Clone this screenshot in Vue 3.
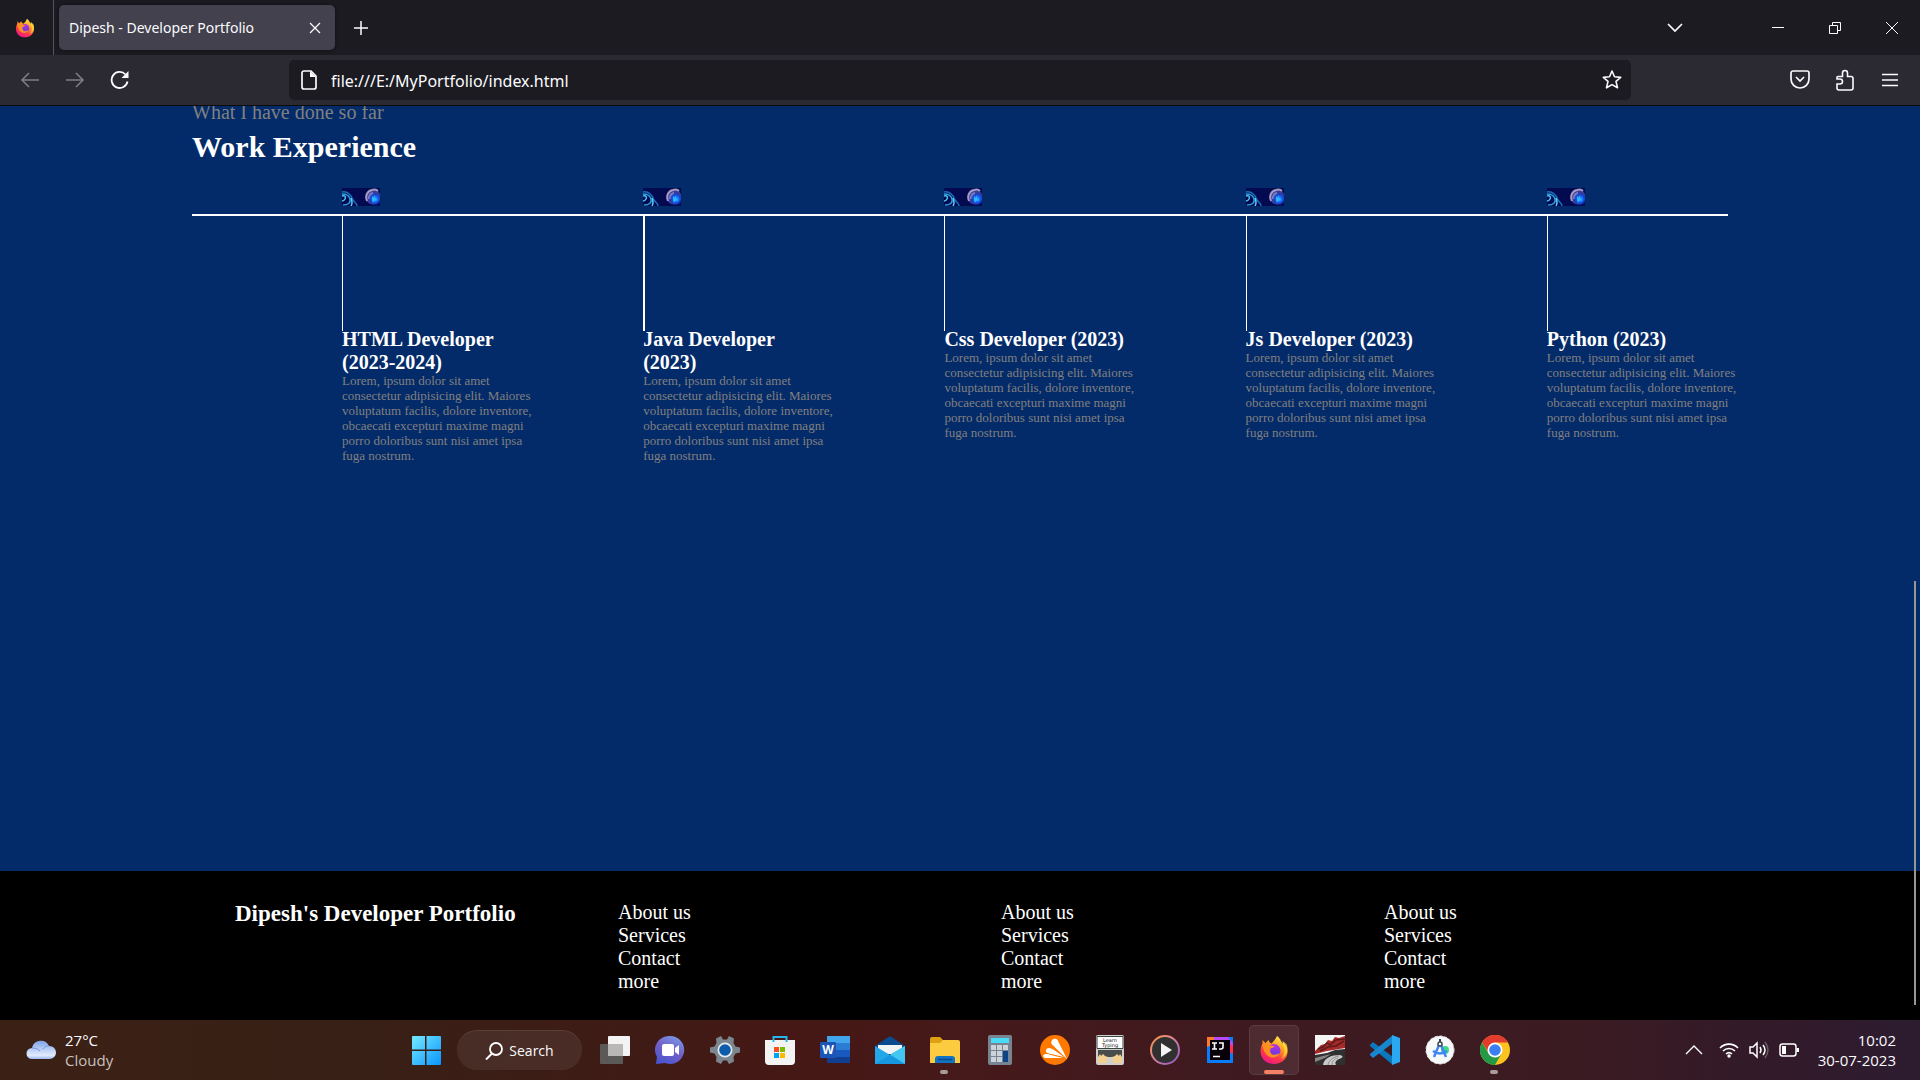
<script setup>
const lorem =
  'Lorem, ipsum dolor sit amet consectetur adipisicing elit. Maiores voluptatum facilis, dolore inventore, obcaecati excepturi maxime magni porro doloribus sunt nisi amet ipsa fuga nostrum.'
const jobs = [
  'HTML Developer (2023-2024)',
  'Java Developer (2023)',
  'Css Developer (2023)',
  'Js Developer (2023)',
  'Python (2023)',
]
const footerLinks = ['About us', 'Services', 'Contact', 'more']
</script>

<template>
  <div class="screen">
    <svg class="sprite" aria-hidden="true">
      <defs>
        <linearGradient id="ffBody" x1="0.8" y1="0" x2="0.3" y2="1">
          <stop offset="0" stop-color="#fff44f" />
          <stop offset="0.4" stop-color="#ff9a1f" />
          <stop offset="0.7" stop-color="#ff3b47" />
          <stop offset="1" stop-color="#f0148c" />
        </linearGradient>
        <linearGradient id="ffGlobe" x1="0.6" y1="0" x2="0.4" y2="1">
          <stop offset="0" stop-color="#b833e1" />
          <stop offset="1" stop-color="#5b3be0" />
        </linearGradient>
        <radialGradient id="moonGlow">
          <stop offset="0" stop-color="#20b8ff" />
          <stop offset="0.5" stop-color="#1556f0" />
          <stop offset="1" stop-color="#1020a0" stop-opacity="0" />
        </radialGradient>
      </defs>
      <symbol id="firefox" viewBox="0 0 30 30">
        <path d="M18 1c4 3 4 6 6 8 0-1 0-2-.5-3 4 4 5.500 8 5 12-1 7-7 11-13.500 11C7 29 1.500 23.500 1.500 16c0-4 1.500-6 2-8V5l3 3 3-3c.5 2 1.500 3 3 3.500 2-2 4-4 5.500-7.500z" fill="url(#ffBody)" />
        <circle cx="15" cy="15.500" r="6.500" fill="url(#ffGlobe)" />
        <path d="M3.500 9c3-1 6 0 8 1.500l4 .5c-1 2-3 2-4 2.500-1 3 0 5 2 6 3 1 5-1 7-1-2 4-7 5-10.500 3-4-2-6-7-6.500-12.500z" fill="#ff9020" />
        <path d="M18 1c4 3 4 6 6 9 3 5 1 11-2 14 6-3 8-9 5.500-15l-4-3c0 1 .5 2 .5 3-2-2-2-5-6-8z" fill="#ffe03c" opacity="0.7" />
      </symbol>
      <symbol id="thumb" viewBox="0 0 38 18">
        <rect width="38" height="18" fill="#040a50" />
        <g fill="none" stroke-width="1.500">
          <path d="M0 8c3-1 4 1 3 3s-2 2-3 2" stroke="#4ac7f0" />
          <path d="M0 4c6-1 9 3 11 8 2 3 4 3 4 6" stroke="#1a6fb8" />
          <path d="M1 17c5 0 8-2 7-6S4 6 0 6" stroke="#2aa0e0" />
          <path d="M9 18c2-3 1-5 0-8" stroke="#5ccbf2" />
        </g>
        <circle cx="31" cy="9" r="7.500" fill="#39409c" />
        <path d="M25 13c-2-5 0-10 5-11 3-1 5 0 6 1" fill="none" stroke="#a79ac4" stroke-width="2" />
        <path d="M27 11c0-3 1-5 4-6" fill="none" stroke="#8d8fc4" stroke-width="2" />
        <circle cx="33" cy="11" r="7" fill="url(#moonGlow)" />
        <path d="M30 8l2 2 1-3v4l3 1-4 1-1 2-1-3z" fill="#28baff" />
      </symbol>
    </svg>

    <header class="browser">
      <div class="tabbar">
        <button class="pin" aria-label="Firefox"><svg width="20" height="20"><use href="#firefox" /></svg></button>
        <div class="tab">
          <span>Dipesh - Developer Portfolio</span>
          <button aria-label="Close tab">
            <svg width="12" height="12" viewBox="0 0 12 12"><path d="M1 1l10 10M11 1L1 11" stroke-width="1.300" /></svg>
          </button>
        </div>
        <button class="newtab" aria-label="New tab">
          <svg width="16" height="16" viewBox="0 0 16 16"><path d="M8 1v14M1 8h14" stroke-width="1.500" /></svg>
        </button>
        <div class="window-controls">
          <button aria-label="List all tabs"><svg width="16" height="10" viewBox="0 0 16 10"><path d="M1 1l7 7 7-7" stroke-width="1.700" /></svg></button>
          <button class="minimize" aria-label="Minimize"><svg width="12" height="14" viewBox="0 0 12 14"><path d="M0 6.500h12" /></svg></button>
          <button aria-label="Restore"><svg width="14" height="14" viewBox="0 0 14 14"><path d="M1.500 4.500h8v8h-8zM4.500 4V1.500h8v8H10" /></svg></button>
          <button aria-label="Close"><svg width="14" height="14" viewBox="0 0 14 14"><path d="M1 1l12 12M13 1L1 13" /></svg></button>
        </div>
      </div>

      <nav class="toolbar" aria-label="Browser toolbar">
        <button class="dim" aria-label="Back"><svg width="20" height="18" viewBox="0 0 20 18"><path d="M19 9H2M9 2L2 9l7 7" stroke-width="1.500" /></svg></button>
        <button class="dim" aria-label="Forward"><svg width="20" height="18" viewBox="0 0 20 18"><path d="M1 9h17M11 2l7 7-7 7" stroke-width="1.500" /></svg></button>
        <button aria-label="Reload">
          <svg width="20" height="20" viewBox="0 0 20 20"><path d="M17.500 11.500A8 8 0 1 1 15.500 4.500" stroke-width="1.800" /><path d="M18.500 1v7h-7z" fill="#fbfbfe" stroke="none" /></svg>
        </button>
        <div class="urlbar">
          <svg width="16" height="20" viewBox="0 0 16 20"><path d="M3 1h7l5 5v11a2 2 0 0 1-2 2H3a2 2 0 0 1-2-2V3a2 2 0 0 1 2-2z" stroke-width="1.700" /><path d="M9 1v6h6z" fill="#fbfbfe" stroke="none" /></svg>
          <input aria-label="Address" type="text" value="file:///E:/MyPortfolio/index.html" />
          <button aria-label="Bookmark">
            <svg width="22" height="22" viewBox="0 0 22 22"><path d="M11 2l2.500 5.800 6.200.600-4.700 4 1.500 6.400L11 15.600l-5.500 3.200L7 12.400l-4.700-4 6.200-.600z" stroke-width="1.600" stroke-linejoin="round" /></svg>
          </button>
        </div>
        <div class="tools">
          <button aria-label="Save to Pocket"><svg width="20" height="20" viewBox="0 0 20 20"><path d="M3 1h14a2 2 0 0 1 2 2v6a9 9 0 0 1-18 0V3a2 2 0 0 1 2-2zM6 7l4 4 4-4" stroke-width="1.700" /></svg></button>
          <button aria-label="Extensions"><svg width="18" height="22" viewBox="0 0 18 22"><path d="M2 7.500h4.500V4a2.500 2.500 0 0 1 5 0v3.500H15a2 2 0 0 1 2 2V19a2 2 0 0 1-2 2H3a2 2 0 0 1-2-2v-4h3a2.500 2.500 0 0 0 0-5H1V8.500a1 1 0 0 1 1-1z" stroke-width="1.600" /></svg></button>
          <button aria-label="Menu"><svg width="16" height="14" viewBox="0 0 16 14"><path d="M0 1.500h16M0 7h16M0 12.500h16" stroke-width="1.500" /></svg></button>
        </div>
      </nav>
    </header>

    <div class="page">
      <main class="work">
        <p class="lead">What I have done so far</p>
        <h1>Work Experience</h1>
        <div class="timeline">
          <ol>
            <li v-for="job in jobs" :key="job">
              <svg class="thumb" width="38" height="18"><use href="#thumb" /></svg>
              <div class="stem"></div>
              <h2>{{ job }}</h2>
              <p>{{ lorem }}</p>
            </li>
          </ol>
        </div>
      </main>
      <footer>
        <h2>Dipesh's Developer Portfolio</h2>
        <ul v-for="n in 3" :key="n">
          <li v-for="link in footerLinks" :key="link"><a href="#">{{ link }}</a></li>
        </ul>
      </footer>
      <div class="scroll-thumb"></div>
    </div>

    <div class="taskbar">
      <button class="weather">
        <svg width="30" height="20" viewBox="0 0 30 20">
          <defs>
            <linearGradient id="cloud" x1="0" y1="0" x2="0" y2="1"><stop offset="0" stop-color="#7fa3ea" /><stop offset="0.8" stop-color="#e2ebfd" /><stop offset="1" stop-color="#9dbaf2" /></linearGradient>
          </defs>
          <path d="M6 19a5.500 5.500 0 0 1 0-11 9 9 0 0 1 17-2 6.500 6.500 0 0 1 1 13z" fill="url(#cloud)" />
          <path d="M6 8c4 0 6 1 8 3M17 9c2-3 4-3 6-3" stroke="#7297e2" fill="none" />
        </svg>
        <span class="weather-text"><span>27°C</span><span class="muted">Cloudy</span></span>
      </button>

      <div class="apps">
        <button aria-label="Start">
          <svg width="30" height="30" viewBox="0 0 30 30">
            <defs><linearGradient id="win" gradientUnits="userSpaceOnUse" x1="0" y1="0" x2="30" y2="30"><stop offset="0" stop-color="#78eeff" /><stop offset="1" stop-color="#0a94ff" /></linearGradient></defs>
            <path d="M1 2a1 1 0 0 1 1-1h12v13.500H1zM15.500 1H29a1 1 0 0 1 1 1v12.500H15.500zM1 16h13v14H2a1 1 0 0 1-1-1zM15.500 16H30v13a1 1 0 0 1-1 1H15.500z" fill="url(#win)" />
          </svg>
        </button>
        <button class="search">
          <svg width="18" height="18" viewBox="0 0 18 18"><circle cx="11" cy="7" r="6" fill="none" stroke="#fff" stroke-width="1.800" /><path d="M7 11.500L1 17.500" stroke="#fff" stroke-width="2" /></svg>
          Search
        </button>
        <button aria-label="Task view">
          <svg width="30" height="30" viewBox="0 0 30 30"><rect x="8" y="1" width="22" height="20" rx="1" fill="#f3f3f3" /><rect y="9" width="23" height="20" rx="1" fill="#5c5a59" /><rect x="8" y="9" width="15" height="12" fill="#b9b8b7" /></svg>
        </button>
        <button aria-label="Chat">
          <svg width="30" height="30" viewBox="0 0 30 30">
            <defs><linearGradient id="chat" x1="0.8" y1="0" x2="0.3" y2="1"><stop offset="0" stop-color="#7a9be8" /><stop offset="0.5" stop-color="#7160c8" /><stop offset="1" stop-color="#4b55cf" /></linearGradient></defs>
            <path d="M15 1a14 14 0 1 1-5 27l-9 1 1-7A14 14 0 0 1 15 1z" fill="url(#chat)" /><rect x="7" y="9" width="12" height="12" rx="2" fill="#fff" /><path d="M20 13l4-3v10l-4-3z" fill="#fff" />
          </svg>
        </button>
        <button aria-label="Settings">
          <svg width="30" height="30" viewBox="0 0 30 30"><path d="M11 1l2 3.500h4L19 1l5 2.500-.500 4.500 2 3.500 4.500 1v5l-4.500 1-2 3.500.5 4.500-5 2.500-2-3.500h-4L11 29l-5-2.500.5-4.500-2-3.500L0 17.500v-5l4.500-1 2-3.500L6 3.500z" fill="#7c868e" /><circle cx="15" cy="15" r="7.500" fill="#e4e9ec" /><circle cx="15" cy="15" r="5.800" fill="#0b5cab" /></svg>
        </button>
        <button aria-label="Microsoft Store">
          <svg width="30" height="30" viewBox="0 0 30 30"><path d="M8.500 6V2h13v4" fill="none" stroke="#27b5ef" stroke-width="2" /><path d="M0 5h30v21a4 4 0 0 1-4 4H4a4 4 0 0 1-4-4z" fill="#f3f3f3" /><path d="M8.500 7V5M21.500 7V5" stroke="#27b5ef" stroke-width="2" /><path d="M9 12h5v5H9z" fill="#f25022" /><path d="M15 12h5v5h-5z" fill="#7fba00" /><path d="M9 18h5v5H9z" fill="#00a4ef" /><path d="M15 18h5v5h-5z" fill="#ffb900" /></svg>
        </button>
        <button aria-label="Word">
          <svg width="30" height="30" viewBox="0 0 30 30"><path d="M7 1h23v7H7z" fill="#41a5ee" /><path d="M7 8h23v7H7z" fill="#2b7cd3" /><path d="M7 15h23v7H7z" fill="#185abd" /><path d="M7 22h23v6H7z" fill="#103f91" /><rect y="7" width="16" height="16" rx="1" fill="#1b55b8" /><text x="8" y="19" text-anchor="middle" class="word-letter">W</text></svg>
        </button>
        <button aria-label="Mail">
          <svg width="30" height="30" viewBox="0 0 30 30"><path d="M0 11L15 1l15 10v5H0z" fill="#0a4b8f" /><path d="M3 10h24v9H3z" fill="#f1f3f5" /><path d="M0 11l15 9 15-9v18H0z" fill="#22a7e8" /><path d="M15 19.500L30 11v18z" fill="#43c6f2" /><path d="M15 20l15 9H0z" fill="#1797df" /></svg>
        </button>
        <button aria-label="File Explorer" class="open">
          <svg width="30" height="30" viewBox="0 0 30 30"><path d="M0 4a2 2 0 0 1 2-2h8l3 3v6H0z" fill="#dfa011" /><path d="M0 8h10l3-3h15a2 2 0 0 1 2 2v21H0z" fill="#fdcb40" /><path d="M5 28v-4a3 3 0 0 1 3-3h14a3 3 0 0 1 3 3v4z" fill="#1173c4" /><path d="M8 24.500h14" stroke="#0a4b8f" stroke-width="1.500" /></svg>
        </button>
        <button aria-label="Calculator">
          <svg width="30" height="30" viewBox="0 0 30 30"><rect x="3" width="24" height="30" rx="2" fill="#788491" /><path d="M6 3h18v5H6z" fill="#47dbf6" /><path d="M6 10h5v5H6zM12 10h5v5h-5zM18 10h5v5h-5zM6 16h5v5H6zM12 16h5v5h-5zM6 22h5v5H6zM12 22h5v5h-5z" fill="#cbd2d9" /><path d="M18 16h5v11h-5z" fill="#0d4488" /></svg>
        </button>
        <button aria-label="Avast">
          <svg width="30" height="30" viewBox="0 0 30 30"><circle cx="15" cy="15" r="15" fill="#ff7800" /><path d="M27 24L11.500 9c-1-3 1.500-6 4.500-5 1.500 0 2 2 3 4zM24 22L7 18c-2-2-1-5 2-5 2 0 3 1 5 2zM23 23H6c-3 0-4-3-1-4 2 0 4 0 6 1z" fill="#fff" /></svg>
        </button>
        <button aria-label="Learn Typing">
          <svg width="30" height="30" viewBox="0 0 30 30"><rect x="1" width="28" height="30" rx="2" fill="#cfcfcb" /><path d="M2 1.500h26v12H2z" fill="#fff" stroke="#3c4640" /><text x="15" y="7" text-anchor="middle" class="tiny">Learn</text><text x="15" y="12" text-anchor="middle" class="tiny">Typing</text><path d="M3 15h24v7H3z" fill="#484c4a" /><path d="M3 28v-6l2-3 1 2 2-2 2 2 3 1-2 6zM19 28l-2-6 3-1 2-2 2 2 1-2 2 3v6z" fill="#f3cf91" /></svg>
        </button>
        <button aria-label="Media Player">
          <svg width="30" height="30" viewBox="0 0 30 30">
            <defs><linearGradient id="media" x1="0" y1="0" x2="1" y2="1"><stop offset="0" stop-color="#ff963c" /><stop offset="0.5" stop-color="#d580a0" /><stop offset="1" stop-color="#8052c6" /></linearGradient></defs>
            <circle cx="15" cy="15" r="15" fill="url(#media)" /><circle cx="15" cy="15" r="13" fill="#303030" /><path d="M11 8l11 7-11 7z" fill="#f4f4f4" />
          </svg>
        </button>
        <button aria-label="IntelliJ IDEA">
          <svg width="30" height="30" viewBox="0 0 30 30">
            <rect x="2" y="2" width="26" height="26" fill="#087cfa" /><path d="M2 2h12l-9 9-3 1z" fill="#fc7a2d" /><path d="M9 2h14l5 6v10l-4-3L9 5z" fill="#b74af7" /><path d="M24 9l4 2v8l-4-2z" fill="#fe315d" /><rect x="5" y="5" width="20" height="20" fill="#080008" /><path d="M7 8h5M9.500 8v6M7 14h5M14 8h4v4q0 2-2 2h-2M8 21.500h7" fill="none" stroke="#fff" stroke-width="1.600" />
          </svg>
        </button>
        <button aria-label="Firefox" class="active"><svg width="30" height="30"><use href="#firefox" /></svg></button>
        <button aria-label="Racing game">
          <svg width="30" height="30" viewBox="0 0 30 30"><path d="M0 0h30v30H0z" fill="#f4f4f4" /><path d="M0 16L6 10l4-1 3-4 4 1 3-4 4 1 6-2v12L12 16 0 19z" fill="#a52a29" /><path d="M3 14l5-2 4-4 3 2 6-5 9-1M5 16l8-4 8-1 8-5" fill="none" stroke="#5c1a1a" stroke-width="1.500" /><path d="M0 20l12-2 8-3 10-1v16H0z" fill="#303030" /><path d="M0 23l16-4-6 4-10 4z" fill="#858585" /><path d="M8 30c1-7 8-10 17-10 4 1 3 3-1 4-4 2-4 4-3 6z" fill="#c9c9c9" /><path d="M13 30c1-5 5-8 11-9M17 30c0-4 2-6 6-7" fill="none" stroke="#8d8d8d" /></svg>
        </button>
        <button aria-label="Visual Studio Code">
          <svg width="30" height="30" viewBox="0 0 30 30"><path d="M0 10l3-3 20 15v8L0 11z" fill="#0a78be" /><path d="M0 20l3 3L23 8V0L0 19z" fill="#1688cf" /><path d="M22 0l8 3v24l-8 3z" fill="#2aa8f2" /></svg>
        </button>
        <button aria-label="Android Studio">
          <svg width="30" height="30" viewBox="0 0 30 30"><circle cx="15" cy="15" r="14" fill="#f7f9f8" stroke="#dfe4e2" stroke-dasharray="3 2" /><circle cx="20" cy="15" r="4" fill="#3ddc84" /><path d="M14 10L9 22M16 10l5 12M8 16q7 5 14 0" fill="none" stroke="#4285f4" stroke-width="2.500" /><circle cx="15" cy="9" r="2" fill="#fff" stroke="#37474f" stroke-width="1.500" /><path d="M15 4v3" stroke="#37474f" stroke-width="2" /></svg>
        </button>
        <button aria-label="Chrome" class="open">
          <svg width="30" height="30" viewBox="0 0 30 30"><circle cx="15" cy="15" r="15" fill="#fcc31e" /><path d="M2 7.500A15 15 0 0 1 28 7.500H15L9 18z" fill="#e33b2e" /><path d="M2 7.500A15 15 0 0 0 15 30l6.500-11.500L8.500 18z" fill="#249a46" /><circle cx="15" cy="15" r="7.500" fill="#fff" /><circle cx="15" cy="15" r="5.800" fill="#3b7ff0" /></svg>
        </button>
      </div>

      <div class="tray">
        <button aria-label="Show hidden icons"><svg width="18" height="10" viewBox="0 0 18 10"><path d="M1 9l8-8 8 8" stroke-width="1.400" /></svg></button>
        <button class="status" aria-label="Network, sound and battery">
          <svg width="20" height="16" viewBox="0 0 20 16"><path d="M1 6a12.500 12.500 0 0 1 18 0M4 9a8.500 8.500 0 0 1 12 0M7 12a4.500 4.500 0 0 1 6 0" stroke-width="1.600" /><circle cx="10" cy="14" r="1.700" fill="#fff" stroke="none" /></svg>
          <svg width="20" height="18" viewBox="0 0 20 18"><path d="M1 6h3l4-4v14l-4-4H1z" stroke-width="1.500" /><path d="M11 6q2 3 0 6M14 4q4 5 0 10" stroke-width="1.500" /><path d="M16 1q6 8 0 16" stroke-width="1.300" opacity="0.300" /></svg>
          <svg width="20" height="14" viewBox="0 0 20 14"><rect x="1" y="1" width="16" height="12" rx="2.500" stroke-width="1.500" /><path d="M3 3h4v8H3zM17.500 5H20v4h-2.500z" fill="#fff" stroke="none" /></svg>
        </button>
        <button class="clock"><span>10:02</span><span>30-07-2023</span></button>
      </div>
    </div>
  </div>
</template>

<style>
body {
  margin: 0;
}
</style>

<style scoped>
.screen {
  display: flex;
  flex-direction: column;
  height: 100vh;
  font-family: "Open Sans", "Noto Sans", sans-serif;
  color: #fbfbfe;
}
.sprite {
  position: absolute;
  width: 0;
  height: 0;
}
* {
  box-sizing: border-box;
}
button {
  display: flex;
  align-items: center;
  justify-content: center;
  padding: 0;
  border: 0;
  background: none;
  color: inherit;
  font: inherit;
}
svg {
  flex: none;
}

/* Browser chrome */
.browser {
  flex: none;
  border-bottom: 1px solid #0c0c0d;
  background: #2b2a33;
  font-family: "Noto Sans", "Open Sans", sans-serif;
}
.browser svg {
  fill: none;
  stroke: #fbfbfe;
}
.browser .pin svg {
  stroke: none;
}
.tabbar {
  display: flex;
  align-items: center;
  height: 55px;
  background: #1c1b22;
}
.pin {
  width: 54px;
  height: 55px;
  padding-right: 4px;
  border-right: 1px solid #55545c;
}
.tab {
  display: flex;
  align-items: center;
  justify-content: space-between;
  width: 276px;
  height: 45px;
  margin-left: 5px;
  padding: 0 14px 0 10px;
  border-radius: 5px;
  background: #42414d;
  box-shadow: 0 0 4px #00000080;
  font-size: 14px;
}
.newtab {
  width: 52px;
  height: 45px;
}
.window-controls {
  display: flex;
  margin-left: auto;
}
.window-controls button {
  width: 57px;
  height: 54px;
}
.window-controls .minimize {
  margin-left: 46px;
}
.toolbar {
  display: flex;
  align-items: center;
  height: 50px;
  padding: 0 8px 0 7px;
}
.toolbar > button {
  width: 45px;
  height: 50px;
}
.dim {
  opacity: 0.4;
}
.urlbar {
  display: flex;
  flex: 1;
  align-items: center;
  gap: 14px;
  height: 40px;
  margin-left: 147px;
  padding: 0 8px 0 12px;
  border-radius: 5px;
  background: #1c1b22;
}
.urlbar input {
  flex: 1;
  min-width: 0;
  padding: 2px 0 0;
  border: 0;
  outline: 0;
  background: none;
  color: inherit;
  font-family: inherit;
  font-size: 16px;
}
.tools {
  display: flex;
  width: 281px;
  justify-content: flex-end;
}
.tools button {
  width: 45px;
}

/* Portfolio page */
.page {
  position: relative;
  display: flex;
  flex: 1;
  flex-direction: column;
  min-height: 0;
  overflow: hidden;
  background: #042b69;
  color: #fff;
  font-family: "Liberation Serif", "Times New Roman", serif;
}
.page h1,
.page h2,
.page p,
.page ul,
.page ol {
  margin: 0;
  padding: 0;
  list-style: none;
}
.page .work {
  flex: 1;
  margin-top: -5px;
  padding: 0 10%;
}
.page .lead {
  color: #808080;
  font-size: 20px;
  line-height: 23px;
}
.page h1 {
  margin-top: 5px;
  font-size: 30px;
  line-height: 35px;
}
.timeline {
  margin-top: 24px;
  background: linear-gradient(#fff, #fff) 0 26px / 100% 2px no-repeat;
}
.page .timeline ol {
  display: grid;
  grid-template-columns: repeat(5, 1fr);
  margin-right: -120px;
  padding-left: 150px;
}
.timeline li {
  padding-right: 108px;
}
.thumb {
  display: block;
}
.stem {
  height: 115px;
  margin: 10px 0 -3px;
  border-left: 1px solid #fff;
}
.timeline li:nth-child(2) .stem {
  border-left-width: 2px;
}
.page .timeline h2 {
  margin: 0 8px -1px 0;
  font-size: 20px;
  line-height: 23px;
}
.page .timeline p {
  color: #808080;
  font-size: 13px;
  line-height: 15px;
}
footer {
  display: grid;
  grid-template-columns: repeat(4, 1fr);
  height: 149px;
  padding: 30px 153px 0 235px;
  background: #000;
}
footer h2 {
  font-size: 23px;
  line-height: 25px;
}
footer li {
  font-size: 20px;
  line-height: 23px;
}
footer a {
  color: #fff;
  text-decoration: none;
}
.scroll-thumb {
  position: absolute;
  right: 4px;
  bottom: 15px;
  width: 2px;
  height: 424px;
  background: #969696;
}

/* Taskbar */
.taskbar {
  display: grid;
  flex: none;
  grid-template-columns: 1fr auto 1fr;
  height: 60px;
  background: linear-gradient(90deg, #3b2015 0%, #382016 18%, #3c1d16 28%, #451815 41%, #46191a 50%, #3e1a20 65%, #3b1b22 82%, #321a29 92%, #2d1c31 100%);
  font-size: 15px;
  line-height: 20px;
}
.weather {
  justify-self: start;
  gap: 9px;
  padding-left: 26px;
  text-align: left;
}
.weather-text,
.clock {
  display: flex;
  flex-direction: column;
}
.muted {
  color: #c9c1be;
}
.apps {
  display: flex;
}
.apps > button {
  position: relative;
  width: 55px;
  height: 60px;
}
.apps > .search {
  gap: 6px;
  width: 125px;
  height: 40px;
  margin: 10px 5px 10px 4px;
  border-top: 1px solid #ffffff18;
  border-radius: 20px;
  background: #ffffff12;
  font-size: 14px;
}
.apps > .active {
  width: 50px;
  height: 50px;
  margin: 5px 3px 5px 2px;
  border: 1px solid #ffffff14;
  border-radius: 5px;
  background: #ffffff14;
}
.open::after,
.active::after {
  position: absolute;
  bottom: 6px;
  left: 23px;
  width: 8px;
  height: 4px;
  border-radius: 2px;
  background: #aa9a9b;
  content: "";
}
.active::after {
  bottom: 0;
  left: 14px;
  width: 20px;
  background: #f58164;
}
.word-letter {
  fill: #fff;
  font-size: 12px;
  font-weight: 700;
}
.tiny {
  fill: #222;
  font-size: 5px;
  font-family: "DejaVu Sans", sans-serif;
}
.tray {
  display: flex;
  justify-self: end;
  padding-right: 24px;
}
.tray svg {
  fill: none;
  stroke: #fff;
}
.status {
  gap: 10px;
  margin: 0 19px 0 16px;
}
.clock {
  align-items: flex-end;
}
</style>
